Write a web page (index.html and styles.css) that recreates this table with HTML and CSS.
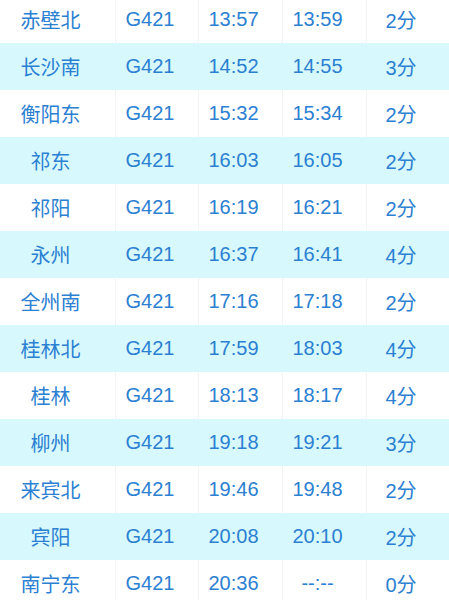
FILE: index.html
```html
<!DOCTYPE html>
<html lang="zh">
<head>
<meta charset="utf-8">
<link rel="stylesheet" href="styles.css">
</head>
<body>
<div class="table">
  <div class="row"><div class="c">赤壁北</div><div class="c">G421</div><div class="c">13:57</div><div class="c">13:59</div><div class="c">2分</div></div>
  <div class="row alt"><div class="c">长沙南</div><div class="c">G421</div><div class="c">14:52</div><div class="c">14:55</div><div class="c">3分</div></div>
  <div class="row"><div class="c">衡阳东</div><div class="c">G421</div><div class="c">15:32</div><div class="c">15:34</div><div class="c">2分</div></div>
  <div class="row alt"><div class="c">祁东</div><div class="c">G421</div><div class="c">16:03</div><div class="c">16:05</div><div class="c">2分</div></div>
  <div class="row"><div class="c">祁阳</div><div class="c">G421</div><div class="c">16:19</div><div class="c">16:21</div><div class="c">2分</div></div>
  <div class="row alt"><div class="c">永州</div><div class="c">G421</div><div class="c">16:37</div><div class="c">16:41</div><div class="c">4分</div></div>
  <div class="row"><div class="c">全州南</div><div class="c">G421</div><div class="c">17:16</div><div class="c">17:18</div><div class="c">2分</div></div>
  <div class="row alt"><div class="c">桂林北</div><div class="c">G421</div><div class="c">17:59</div><div class="c">18:03</div><div class="c">4分</div></div>
  <div class="row"><div class="c">桂林</div><div class="c">G421</div><div class="c">18:13</div><div class="c">18:17</div><div class="c">4分</div></div>
  <div class="row alt"><div class="c">柳州</div><div class="c">G421</div><div class="c">19:18</div><div class="c">19:21</div><div class="c">3分</div></div>
  <div class="row"><div class="c">来宾北</div><div class="c">G421</div><div class="c">19:46</div><div class="c">19:48</div><div class="c">2分</div></div>
  <div class="row alt"><div class="c">宾阳</div><div class="c">G421</div><div class="c">20:08</div><div class="c">20:10</div><div class="c">2分</div></div>
  <div class="row"><div class="c">南宁东</div><div class="c">G421</div><div class="c">20:36</div><div class="c">--:--</div><div class="c">0分</div></div>
</div>
</body>
</html>
```

FILE: styles.css
```css
html, body {
  margin: 0;
  padding: 0;
  background: #ffffff;
}
.table {
  margin-top: -4px;
  width: 449px;
  font-family: "Liberation Sans", "Noto Sans CJK SC", sans-serif;
  font-size: 20px;
  color: #2b80d2;
}
.row {
  display: grid;
  grid-template-columns: 116px 83px 84px 84px 82px;
  height: 47px;
  background: #ffffff;
}
.row.alt {
  background: #d7f9fe;
}
.c {
  display: flex;
  align-items: center;
  justify-content: center;
  padding-right: 14px;
  border-right: 1px solid #f1f3f4;
  box-sizing: border-box;
}
.row.alt .c {
  border-right-color: transparent;
}
.c:last-child {
  border-right: none;
}
```
